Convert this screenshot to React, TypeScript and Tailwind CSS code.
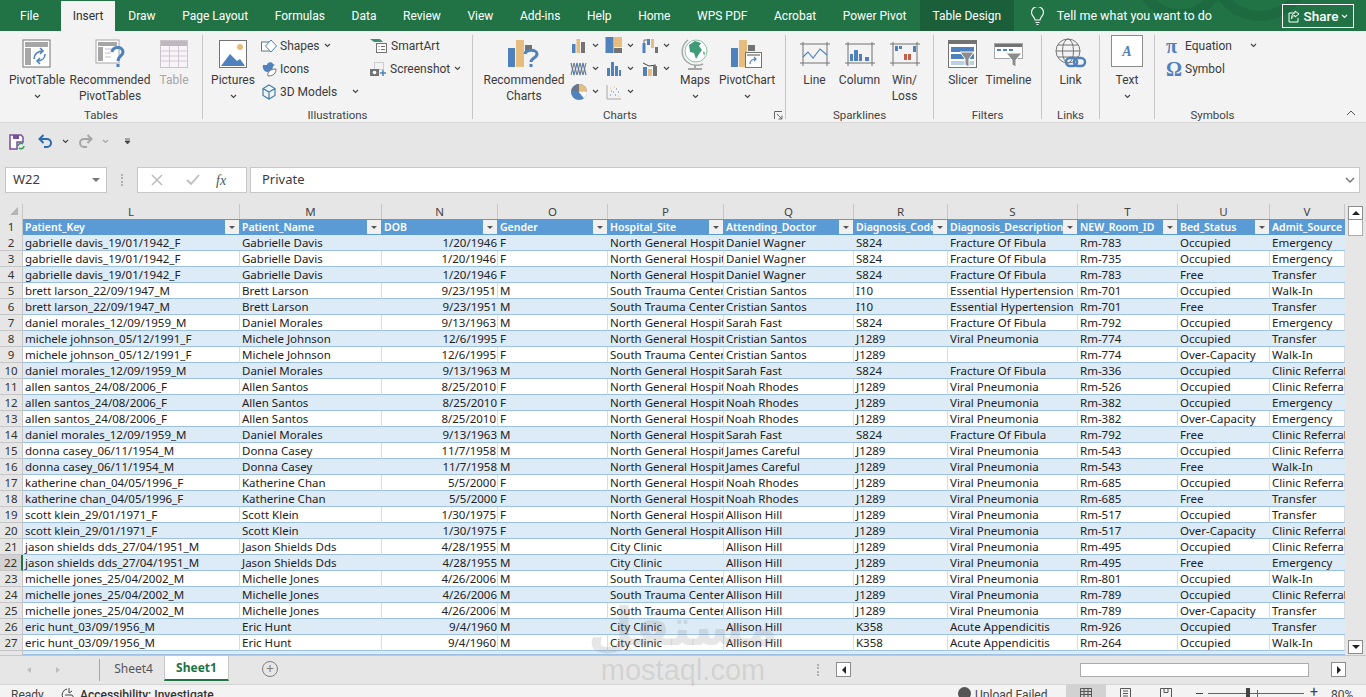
import type { ReactNode } from "react";

const GRAY = "#737373";
const BLUE = "#4f81bd";
const TAN = "#e6bc7f";

const cols = [
  { letter: "L", name: "Patient_Key", w: "w-[217px]" },
  { letter: "M", name: "Patient_Name", w: "w-[142px]" },
  { letter: "N", name: "DOB", w: "w-[116px]" },
  { letter: "O", name: "Gender", w: "w-[110px]" },
  { letter: "P", name: "Hospital_Site", w: "w-[116px]" },
  { letter: "Q", name: "Attending_Doctor", w: "w-[130px]" },
  { letter: "R", name: "Diagnosis_Code", w: "w-[94px]" },
  { letter: "S", name: "Diagnosis_Description", w: "w-[130px]" },
  { letter: "T", name: "NEW_Room_ID", w: "w-[100px]" },
  { letter: "U", name: "Bed_Status", w: "w-[92px]" },
  { letter: "V", name: "Admit_Source", w: "w-[75px]" },
];

const NG = "North General Hospital";
const ST = "South Trauma Center";
const CC = "City Clinic";
const FR = "Fracture Of Fibula";
const VP = "Viral Pneumonia";

const gabrielle = ["gabrielle davis_19/01/1942_F", "Gabrielle Davis", "1/20/1946", "F", NG, "Daniel Wagner", "S824", FR];
const brett = ["brett larson_22/09/1947_M", "Brett Larson", "9/23/1951", "M", ST, "Cristian Santos", "I10", "Essential Hypertension"];
const daniel = ["daniel morales_12/09/1959_M", "Daniel Morales", "9/13/1963", "M", NG, "Sarah Fast", "S824", FR];
const micheleA = ["michele johnson_05/12/1991_F", "Michele Johnson", "12/6/1995", "F", NG, "Cristian Santos", "J1289", VP];
const micheleB = ["michele johnson_05/12/1991_F", "Michele Johnson", "12/6/1995", "F", ST, "Cristian Santos", "J1289", ""];
const allen = ["allen santos_24/08/2006_F", "Allen Santos", "8/25/2010", "F", NG, "Noah Rhodes", "J1289", VP];
const donna = ["donna casey_06/11/1954_M", "Donna Casey", "11/7/1958", "M", NG, "James Careful", "J1289", VP];
const katherine = ["katherine chan_04/05/1996_F", "Katherine Chan", "5/5/2000", "F", NG, "Noah Rhodes", "J1289", VP];
const scott = ["scott klein_29/01/1971_F", "Scott Klein", "1/30/1975", "F", NG, "Allison Hill", "J1289", VP];
const jason = ["jason shields dds_27/04/1951_M", "Jason Shields Dds", "4/28/1955", "M", CC, "Allison Hill", "J1289", VP];
const michelle = ["michelle jones_25/04/2002_M", "Michelle Jones", "4/26/2006", "M", ST, "Allison Hill", "J1289", VP];
const eric = ["eric hunt_03/09/1956_M", "Eric Hunt", "9/4/1960", "M", CC, "Allison Hill", "K358", "Acute Appendicitis"];

const rows: string[][] = [
  [...gabrielle, "Rm-783", "Occupied", "Emergency"],
  [...gabrielle, "Rm-735", "Occupied", "Emergency"],
  [...gabrielle, "Rm-783", "Free", "Transfer"],
  [...brett, "Rm-701", "Occupied", "Walk-In"],
  [...brett, "Rm-701", "Free", "Transfer"],
  [...daniel, "Rm-792", "Occupied", "Emergency"],
  [...micheleA, "Rm-774", "Occupied", "Transfer"],
  [...micheleB, "Rm-774", "Over-Capacity", "Walk-In"],
  [...daniel, "Rm-336", "Occupied", "Clinic Referral"],
  [...allen, "Rm-526", "Occupied", "Clinic Referral"],
  [...allen, "Rm-382", "Occupied", "Emergency"],
  [...allen, "Rm-382", "Over-Capacity", "Emergency"],
  [...daniel, "Rm-792", "Free", "Clinic Referral"],
  [...donna, "Rm-543", "Occupied", "Clinic Referral"],
  [...donna, "Rm-543", "Free", "Walk-In"],
  [...katherine, "Rm-685", "Occupied", "Clinic Referral"],
  [...katherine, "Rm-685", "Free", "Transfer"],
  [...scott, "Rm-517", "Occupied", "Transfer"],
  [...scott, "Rm-517", "Over-Capacity", "Clinic Referral"],
  [...jason, "Rm-495", "Occupied", "Clinic Referral"],
  [...jason, "Rm-495", "Free", "Emergency"],
  [...michelle, "Rm-801", "Occupied", "Walk-In"],
  [...michelle, "Rm-789", "Occupied", "Clinic Referral"],
  [...michelle, "Rm-789", "Over-Capacity", "Transfer"],
  [...eric, "Rm-926", "Occupied", "Transfer"],
  [...eric, "Rm-264", "Occupied", "Walk-In"],
];

const tabs = ["Draw", "Page Layout", "Formulas", "Data", "Review", "View", "Add-ins", "Help", "Home", "WPS PDF", "Acrobat", "Power Pivot"];

function Chev({ color = "#444" }: { color?: string }) {
  return (
    <svg width="7" height="5" viewBox="0 0 7 5" className="shrink-0">
      <path d="M1 1l2.5 2.5L6 1" fill="none" stroke={color} strokeWidth="1.1" />
    </svg>
  );
}

function Icon({ w, h, children }: { w: number; h: number; children: ReactNode }) {
  return (
    <svg width={w} height={h} viewBox={`0 0 ${w} ${h}`} className="shrink-0">
      {children}
    </svg>
  );
}

const PivotIcon = () => (
  <Icon w={30} h={30}>
    <rect x="1" y="1" width="27" height="27" fill="#fff" stroke={GRAY} />
    <rect x="3" y="3" width="23" height="5" fill="#a6a6a6" />
    <rect x="3" y="9" width="6" height="17" fill="#a6a6a6" />
    <path d="M12 20c0-5 4-8 9-8M18 9l3 3-3 3M23 15c0 4-3 7-8 7M18 19l-3 3 3 3" fill="none" stroke={BLUE} strokeWidth="1.6" />
  </Icon>
);

const RecPivotIcon = () => (
  <Icon w={30} h={30}>
    <rect x="1" y="1" width="23" height="23" fill="#fff" stroke="#a6a6a6" />
    <rect x="3" y="3" width="19" height="4" fill="#a6a6a6" />
    <rect x="3" y="8" width="5" height="14" fill="#a6a6a6" />
    <path d="M10 10h8M10 14h6M10 18h6" stroke="#bfbfbf" />
    <path d="M17 13c1-6 11-6 11 0 0 4-5 4-5 9" fill="none" stroke={BLUE} strokeWidth="3" />
    <rect x="21.5" y="25" width="3" height="3" fill={BLUE} />
  </Icon>
);

const TableIcon = () => (
  <Icon w={28} h={28}>
    <rect x="0.5" y="0.5" width="27" height="27" fill="#f8f3f8" stroke="#cbc3cb" />
    <rect x="1" y="1" width="26" height="5" fill="#bfb8bf" />
    <path d="M1 11h26M1 16h26M1 21h26M9.5 6v21M18.5 6v21" stroke="#d5c8d5" />
  </Icon>
);

const PicturesIcon = () => (
  <Icon w={28} h={28}>
    <rect x="0.5" y="0.5" width="27" height="27" fill="#fff" stroke={GRAY} />
    <circle cx="21" cy="7" r="3" fill={TAN} />
    <path d="M2 26l9-12 7 7 3-2 5 7z" fill={BLUE} />
  </Icon>
);

const ShapesIcon = () => (
  <Icon w={16} h={16}>
    <rect x="0.5" y="4" width="9" height="9" fill="#fff" stroke={GRAY} />
    <path d="M10 2l5.500 6-5.500 6-5.500-6z" fill="#fff" stroke={BLUE} />
  </Icon>
);

const IconsIcon = () => (
  <Icon w={16} h={16}>
    <path d="M2 4h4c0-3 5-4 6-1l2 1-2 1c0 3-2 6-6 6-2 0-5-3-4-7z" fill={BLUE} />
    <path d="M7 15c-1-4 2-7 8-7 0 4-2 7-8 7z" fill="#fff" stroke={GRAY} />
  </Icon>
);

const ModelsIcon = () => (
  <Icon w={16} h={16}>
    <path d="M8 1l6 3.500v7L8 15l-6-3.500v-7zM2 4.500L8 8l6-3.500M8 8v7" fill="none" stroke="#3f7fa8" strokeWidth="1.200" />
  </Icon>
);

const SmartArtIcon = () => (
  <Icon w={18} h={16}>
    <path d="M0 1h10l3 3H4z" fill="#3f8f72" />
    <rect x="6.500" y="5.500" width="10" height="9" fill="#fff" stroke={GRAY} />
    <path d="M8.500 8.500h1M11 8.500h4M8.500 11.500h1M11 11.500h4" stroke={GRAY} />
  </Icon>
);

const ScreenshotIcon = () => (
  <Icon w={17} h={16}>
    <rect x="4.500" y="1.500" width="9" height="7" fill="none" stroke="#a6a6a6" strokeDasharray="1 1" />
    <rect x="0" y="8" width="9" height="7" fill={GRAY} />
    <circle cx="4.500" cy="11.500" r="1.800" fill="#fff" />
    <path d="M13 9v6M10 12h6" stroke={BLUE} strokeWidth="1.500" />
  </Icon>
);

const RecChartsIcon = () => (
  <Icon w={32} h={30}>
    <rect x="0" y="9" width="7" height="19" fill={BLUE} />
    <rect x="8" y="1" width="8" height="27" fill={TAN} />
    <rect x="17" y="6" width="7" height="6" fill={GRAY} />
    <path d="M17 15c1-5 12-5 12 0 0 4-6 4-6 8" fill="none" stroke={BLUE} strokeWidth="3" />
    <rect x="21.500" y="25" width="3" height="3" fill={BLUE} />
  </Icon>
);

const ColumnMini = () => (
  <Icon w={16} h={16}>
    <rect x="1" y="6" width="3.500" height="9" fill={BLUE} />
    <rect x="5.500" y="1" width="3.500" height="14" fill={TAN} />
    <rect x="10" y="4" width="4" height="11" fill={GRAY} />
  </Icon>
);
const TreemapMini = () => (
  <Icon w={18} h={17}>
    <rect x="0.500" y="0" width="8" height="16" fill={BLUE} />
    <rect x="9" y="0" width="8" height="10" fill={TAN} />
    <rect x="9" y="11" width="8" height="5" fill={GRAY} />
  </Icon>
);
const WaterfallMini = () => (
  <Icon w={16} h={16}>
    <rect x="0.500" y="5" width="3" height="10" fill={BLUE} />
    <path d="M2 5V2h4" stroke={GRAY} fill="none" />
    <rect x="5" y="1" width="3" height="6" fill={BLUE} />
    <rect x="9" y="1" width="3" height="9" fill={TAN} />
    <rect x="13" y="9" width="3" height="6" fill={GRAY} />
  </Icon>
);
const LineMini = () => (
  <Icon w={18} h={16}>
    <path d="M1 2l3 12 3-12 3 12 3-12 3 12" fill="none" stroke={BLUE} strokeWidth="1.200" />
    <path d="M1 14l3-12 3 12 3-12 3 12 3-12" fill="none" stroke={GRAY} strokeWidth="1" />
  </Icon>
);
const BarsMini = () => (
  <Icon w={16} h={16}>
    <rect x="1" y="7" width="3" height="8" fill={BLUE} />
    <rect x="5" y="1" width="3" height="14" fill={BLUE} />
    <rect x="9" y="5" width="3" height="10" fill={BLUE} />
    <rect x="13" y="9" width="2" height="6" fill={BLUE} />
  </Icon>
);
const ComboMini = () => (
  <Icon w={16} h={16}>
    <rect x="1" y="6" width="4" height="9" fill={BLUE} />
    <rect x="6" y="8" width="4" height="7" fill={TAN} />
    <rect x="11" y="5" width="4" height="10" fill={GRAY} />
    <path d="M1 2l6 3 7-1" fill="none" stroke="#444" />
  </Icon>
);
const PieMini = () => (
  <Icon w={18} h={18}>
    <circle cx="9" cy="9" r="8" fill={BLUE} />
    <path d="M9 9V1a8 8 0 0 1 8 8z" fill={TAN} />
    <path d="M9 9h8a8 8 0 0 1-3 6z" fill="#fff" stroke="#fff" strokeWidth="0.500" />
    <path d="M9 9V1H7l-6 6z" fill={GRAY} opacity="0.800" />
  </Icon>
);
const ScatterMini = () => (
  <Icon w={16} h={16}>
    <path d="M1 1v14h14" fill="none" stroke="#a6a6a6" />
    <path d="M4 11h1M7 8h1M10 5h1M5 7h1M9 11h1M12 8h1" stroke={BLUE} />
    <path d="M4 4h1M12 12h1M8 3h1" stroke={TAN} />
  </Icon>
);

const MapsIcon = () => (
  <Icon w={28} h={34}>
    <path d="M7 3C0 8-1 19 6 25c5 4 12 4 16 2" fill="none" stroke="#a6a6a6" strokeWidth="1.500" />
    <circle cx="15" cy="14" r="11" fill="#fff" stroke="#8dbfa8" />
    <path d="M8 8l6-4 6 2-2 3 3 4-3 4-3 5-2-6-4-1zM22 14l2 2-1 3z" fill="#3f9a78" />
    <path d="M14 28v3M7 32h14" stroke="#a6a6a6" strokeWidth="2" />
  </Icon>
);

const PivotChartIcon = () => (
  <Icon w={32} h={30}>
    <rect x="0" y="9" width="7" height="19" fill={BLUE} />
    <rect x="8" y="1" width="8" height="27" fill={TAN} />
    <rect x="17" y="6" width="7" height="6" fill={GRAY} />
    <rect x="14.500" y="13.500" width="16" height="15" fill="#fff" stroke={GRAY} />
    <path d="M16 15h13v2H16z" fill="#a6a6a6" />
    <path d="M19 25c0-3 2-5 6-5M23 18l2 2-2 2" fill="none" stroke={BLUE} strokeWidth="1.200" />
  </Icon>
);

const SparkLine = () => (
  <Icon w={32} h={24}>
    <path d="M1 2h30M1 21h30M4 0v24M28 0v24" stroke={GRAY} />
    <path d="M4 15l5-5 5 6 7-9 7 6" fill="none" stroke={BLUE} strokeWidth="1.100" />
  </Icon>
);
const SparkColumn = () => (
  <Icon w={32} h={24}>
    <path d="M1 2h30M1 21h30M4 0v24M28 0v24" stroke={GRAY} />
    <path d="M6 12h3v7H6zM10 8h4v11h-4zM15 12h3v7h-3zM21 15h4v4h-4z" fill={BLUE} />
  </Icon>
);
const SparkWin = () => (
  <Icon w={32} h={24}>
    <path d="M1 2h30M1 21h30M4 0v24M28 0v24" stroke={GRAY} />
    <path d="M6 4h3v5H6zM10 4h3v3h-3zM24 4h3v6h-3z" fill={BLUE} />
    <path d="M15 12h3v6h-3zM19 12h3v6h-3z" fill="#c0604d" />
  </Icon>
);

const SlicerIcon = () => (
  <Icon w={30} h={28}>
    <rect x="0.500" y="0.500" width="28" height="27" fill="#fff" stroke={GRAY} />
    <rect x="1" y="1" width="27" height="3" fill={GRAY} />
    <rect x="3" y="7" width="23" height="5" fill={BLUE} />
    <rect x="3" y="14" width="23" height="5" fill={BLUE} />
    <rect x="3" y="21" width="23" height="4" fill="#bcd1e6" />
    <path d="M12 12h14l-5 7v8l-4-2v-6z" fill="#8c8c8c" stroke="#fff" />
  </Icon>
);
const TimelineIcon = () => (
  <Icon w={30} h={28}>
    <rect x="0.500" y="3.500" width="28" height="15" fill="#fff" stroke="#a6a6a6" />
    <rect x="1" y="4" width="27" height="3" fill={GRAY} />
    <path d="M3 10h4M9 10h4M15 10h4" stroke={BLUE} strokeWidth="2" />
    <path d="M12 13h16l-6 7v7l-4-2v-5z" fill="#8c8c8c" stroke="#fff" />
  </Icon>
);
const LinkIcon = () => (
  <Icon w={32} h={32}>
    <circle cx="13" cy="13" r="12" fill="none" stroke={GRAY} />
    <ellipse cx="13" cy="13" rx="5.500" ry="12" fill="none" stroke={GRAY} />
    <path d="M1 13h24M3 7h20M3 19h20" stroke={GRAY} />
    <rect x="11" y="20" width="11" height="8" rx="4" fill="none" stroke={BLUE} strokeWidth="2.500" />
    <rect x="19" y="20" width="11" height="8" rx="4" fill="none" stroke={BLUE} strokeWidth="2.500" />
  </Icon>
);
const SaveIcon = () => (
  <Icon w={16} h={16}>
    <path d="M1 1h11l2 2v5H8v7H1z" fill="#fff" stroke="#7a4f9a" strokeWidth="1.500" />
    <path d="M4 1h6v4H4z" fill="#7a4f9a" />
    <path d="M9 12a3 3 0 0 1 5-2M15 12a3 3 0 0 1-5 2" fill="none" stroke="#2e9b58" strokeWidth="1.500" />
  </Icon>
);
const UndoIcon = ({ color, flip }: { color: string; flip?: boolean }) => (
  <svg width="15" height="15" viewBox="0 0 15 15" className={flip ? "-scale-x-100 shrink-0" : "shrink-0"}>
    <path d="M2 5h7a4 4 0 0 1 0 8H6M5.500 1L1.500 5l4 4" fill="none" stroke={color} strokeWidth="2" />
  </svg>
);

function BigBtn({ w, icon, lines, chevron, muted }: { w: string; icon: ReactNode; lines: string[]; chevron?: boolean; muted?: boolean }) {
  return (
    <div className={`${w} flex flex-col items-center shrink-0`}>
      <div className="h-[41px] flex items-center justify-center pt-[4px]">{icon}</div>
      {lines.map((l) => (
        <div key={l} className={`h-[16px] leading-[16px] whitespace-nowrap ${muted ? "text-[#a6a6a6]" : ""}`}>
          {l}
        </div>
      ))}
      {chevron && (
        <div className="h-[16px] flex items-center">
          <Chev />
        </div>
      )}
    </div>
  );
}

function SmallBtn({ icon, label, chevGap }: { icon: ReactNode; label: string; chevGap?: string }) {
  return (
    <div className="h-[23px] flex items-center gap-[3px] whitespace-nowrap">
      {icon}
      <span>{label}</span>
      {chevGap && (
        <span className={chevGap}>
          <Chev />
        </span>
      )}
    </div>
  );
}

function MiniChart({ icon }: { icon: ReactNode }) {
  return (
    <div className="h-[23px] w-[35px] flex items-center gap-[3px]">
      <div className="w-[20px] flex justify-center">{icon}</div>
      <Chev />
    </div>
  );
}

function Group({ w, label, children, after, labelPad = "" }: { w: string; label: string; children: ReactNode; after?: ReactNode; labelPad?: string }) {
  return (
    <div className={`${w} h-[92px] flex flex-col shrink-0`}>
      <div className="h-[76px] flex">{children}</div>
      <div className={`h-[16px] leading-[16px] flex justify-center text-[11.500px] text-[#444] relative ${labelPad}`}>
        {label}
        {after}
      </div>
    </div>
  );
}

const Sep = () => <div className="w-px h-[84px] mt-[4px] bg-[#c6c6c6] shrink-0" />;

function Ribbon() {
  return (
    <div className="h-[92px] bg-[#f3f3f3] flex text-[12px] text-[#3b3b3b] border-b border-[#d8d8d8] shrink-0 font-['Roboto',sans-serif]">
      <Group w="w-[202px]" label="Tables">
        <BigBtn w="w-[74px]" icon={<PivotIcon />} lines={["PivotTable"]} chevron />
        <BigBtn w="w-[72px]" icon={<RecPivotIcon />} lines={["Recommended", "PivotTables"]} />
        <BigBtn w="w-[56px]" icon={<TableIcon />} lines={["Table"]} muted />
      </Group>
      <Sep />
      <Group w="w-[269px]" label="Illustrations">
        <BigBtn w="w-[58px] pl-[2px]" icon={<PicturesIcon />} lines={["Pictures"]} chevron />
        <div className="w-[109px] pt-[3px] shrink-0">
          <SmallBtn icon={<ShapesIcon />} label="Shapes" chevGap="ml-[1px]" />
          <SmallBtn icon={<IconsIcon />} label="Icons" />
          <SmallBtn icon={<ModelsIcon />} label="3D Models" chevGap="ml-[12px]" />
        </div>
        <div className="pt-[3px]">
          <SmallBtn icon={<SmartArtIcon />} label="SmartArt" />
          <SmallBtn icon={<ScreenshotIcon />} label="Screenshot" chevGap="ml-[1px]" />
        </div>
      </Group>
      <Sep />
      <Group
        w="w-[312px]"
        label="Charts"
        labelPad="pr-[18px]"
        after={
          <svg width="9" height="9" viewBox="0 0 9 9" className="absolute right-[2px] top-[4px]">
            <path d="M0.500 8V0.500H8M3 3l5 5M8 4.500V8H4.500" fill="none" stroke="#666" />
          </svg>
        }
      >
        <BigBtn w="w-[96px] pl-[6px]" icon={<RecChartsIcon />} lines={["Recommended", "Charts"]} />
        <div className="w-[35px] pt-[3px] shrink-0">
          <MiniChart icon={<ColumnMini />} />
          <MiniChart icon={<LineMini />} />
          <MiniChart icon={<PieMini />} />
        </div>
        <div className="w-[36px] pt-[3px] shrink-0">
          <MiniChart icon={<TreemapMini />} />
          <MiniChart icon={<BarsMini />} />
          <MiniChart icon={<ScatterMini />} />
        </div>
        <div className="w-[30px] pt-[3px] shrink-0">
          <MiniChart icon={<WaterfallMini />} />
          <MiniChart icon={<ComboMini />} />
        </div>
        <BigBtn w="w-[50px]" icon={<MapsIcon />} lines={["Maps"]} chevron />
        <BigBtn w="w-[54px]" icon={<PivotChartIcon />} lines={["PivotChart"]} chevron />
      </Group>
      <Sep />
      <Group w="w-[147px]" label="Sparklines">
        <div className="w-[6px] shrink-0" />
        <BigBtn w="w-[45px]" icon={<SparkLine />} lines={["Line"]} />
        <BigBtn w="w-[45px]" icon={<SparkColumn />} lines={["Column"]} />
        <BigBtn w="w-[45px]" icon={<SparkWin />} lines={["Win/", "Loss"]} />
      </Group>
      <Sep />
      <Group w="w-[107px]" label="Filters">
        <div className="w-[7px] shrink-0" />
        <BigBtn w="w-[44px]" icon={<SlicerIcon />} lines={["Slicer"]} />
        <BigBtn w="w-[47px]" icon={<TimelineIcon />} lines={["Timeline"]} />
      </Group>
      <Sep />
      <Group w="w-[57px]" label="Links">
        <BigBtn w="w-[57px]" icon={<LinkIcon />} lines={["Link"]} />
      </Group>
      <Sep />
      <Group w="w-[54px]" label="">
        <div className="w-[54px] flex flex-col items-center pt-[4px]">
          <div className="w-[32px] h-[32px] bg-white border border-[#8c8c8c] flex items-center justify-center text-[#4f81bd] font-bold italic text-[14px] font-['Liberation_Serif',serif]">
            A
          </div>
          <div className="h-[16px] leading-[16px] mt-[5px]">Text</div>
          <div className="h-[16px] flex items-center">
            <Chev />
          </div>
        </div>
      </Group>
      <Sep />
      <Group w="w-[115px]" label="Symbols">
        <div className="pt-[3px] pl-[11px] w-full">
          <div className="h-[23px] flex items-center whitespace-nowrap">
            <span className="w-[19px] text-[#4f81bd] text-[20px] leading-none font-bold font-['Liberation_Serif',serif]">π</span>
            <span>Equation</span>
            <span className="ml-[18px]">
              <Chev />
            </span>
          </div>
          <div className="h-[23px] flex items-center whitespace-nowrap">
            <span className="w-[19px] text-[#4f81bd] text-[20px] leading-none font-bold font-['Liberation_Serif',serif]">Ω</span>
            <span>Symbol</span>
          </div>
        </div>
      </Group>
      <div className="flex-1 flex justify-end items-end pr-[10px] pb-[6px]">
        <svg width="10" height="6" viewBox="0 0 10 6">
          <path d="M1 5l4-4 4 4" fill="none" stroke="#555" />
        </svg>
      </div>
    </div>
  );
}

function TitleTabs() {
  return (
    <div className="h-[31px] bg-[#217346] flex items-stretch text-[12px] text-white shrink-0 relative overflow-hidden font-['Roboto',sans-serif]">
      <svg width="260" height="31" viewBox="0 0 260 31" className="absolute left-[1110px] top-0">
        <circle cx="70" cy="-28" r="42" fill="none" stroke="#1d6a40" strokeWidth="10" />
        <circle cx="150" cy="-30" r="46" fill="none" stroke="#1d6a40" strokeWidth="10" />
      </svg>
      <div className="w-[61px] pl-[20px] pt-px flex items-center">File</div>
      <div className="w-[54px] mt-[1px] bg-[#f3f3f3] text-[#2f2f2f] flex items-center justify-center">Insert</div>
      {tabs.map((t) => (
        <div key={t} className="px-[13.300px] pt-px flex items-center whitespace-nowrap">
          {t}
        </div>
      ))}
      <div className="w-[94px] pt-px bg-[#1b5e3a] flex items-center justify-center whitespace-nowrap">Table Design</div>
      <div className="ml-[16px] flex items-center">
        <svg width="15" height="18" viewBox="0 0 15 18">
          <path d="M5 13c0-3-3.500-4-3.500-7.500a6 6 0 0 1 12 0C13.500 9 10 10 10 13zM5.500 15.500h4M6.500 17.500h2" fill="none" stroke="#fff" strokeWidth="1.100" />
        </svg>
      </div>
      <div className="ml-[12px] pt-px flex items-center whitespace-nowrap text-[12.500px] relative">Tell me what you want to do</div>
      <div className="absolute left-[1282px] top-[4px] w-[72px] h-[24px] border border-white flex items-center justify-center gap-[3px] font-medium text-[13.500px]">
        <svg width="13" height="13" viewBox="0 0 13 13">
          <path d="M6 3H1v9h9V8M7 1l4 3-4 3V5.500C5 5.500 4 7 3.500 9 3.500 5.500 5 3 7 3z" fill="none" stroke="#fff" />
        </svg>
        Share
        <Chev color="#fff" />
      </div>
    </div>
  );
}

function Qat() {
  return (
    <div className="h-[37px] bg-[#e6e6e6] flex items-center pl-[9px] shrink-0">
      <SaveIcon />
      <div className="w-[13px]" />
      <UndoIcon color="#2b6cb0" />
      <div className="w-[9px]" />
      <Chev />
      <div className="w-[9px]" />
      <UndoIcon color="#a6a6a6" flip />
      <div className="w-[9px]" />
      <Chev color="#a6a6a6" />
      <div className="w-[15px]" />
      <svg width="7" height="7" viewBox="0 0 7 7">
        <path d="M1 1h5M1 3h5l-2.500 3z" fill="#444" stroke="#444" strokeWidth="0.800" />
      </svg>
    </div>
  );
}

function FormulaBar() {
  return (
    <div className="h-[44px] bg-[#e6e6e6] flex items-start pt-[7px] pl-[5px] pr-[6px] text-[13px] text-[#3b3b3b] shrink-0">
      <div className="w-[102px] h-[26px] bg-white border border-[#c6c6c6] flex items-center justify-between pl-[7px] pr-[6px]">
        W22
        <div className="w-0 h-0 border-x-[4px] border-x-transparent border-t-[4px] border-t-[#777]" />
      </div>
      <div className="w-[30px] h-[26px] flex items-center justify-center">
        <div className="h-[12px] border-l-2 border-dotted border-[#b0b0b0]" />
      </div>
      <div className="w-[110px] h-[26px] bg-white border border-[#c6c6c6] flex items-center pl-[13px]">
        <svg width="12" height="12" viewBox="0 0 12 12">
          <path d="M1 1l10 10M11 1L1 11" stroke="#bdbdbd" strokeWidth="1.500" />
        </svg>
        <svg width="14" height="12" viewBox="0 0 14 12" className="ml-[23px]">
          <path d="M1 6l4 4 8-9" fill="none" stroke="#bdbdbd" strokeWidth="1.800" />
        </svg>
        <span className="ml-[16px] italic font-['Liberation_Serif',serif] text-[#555] text-[14px]">fx</span>
      </div>
      <div className="ml-[3px] flex-1 h-[26px] bg-white border border-[#c6c6c6] flex items-center justify-between pl-[11px] pr-[4px]">
        Private
        <svg width="10" height="7" viewBox="0 0 10 7">
          <path d="M1 1l4 4 4-4" fill="none" stroke="#777" strokeWidth="1.500" />
        </svg>
      </div>
    </div>
  );
}

function FilterBtn() {
  return (
    <div className="w-[14px] h-[14px] bg-[#f0f0f0] flex items-center justify-center shrink-0 mr-px">
      <div className="w-0 h-0 border-x-[3px] border-x-transparent border-t-[3px] border-t-[#555]" />
    </div>
  );
}

function Sheet() {
  return (
    <div className="h-[451px] flex shrink-0">
      <div className="w-[1345px] shrink-0 overflow-hidden">
        <div className="h-[15px] flex bg-[#e6e6e6]">
          <div className="w-[23px] flex items-end justify-end pr-[4px] pb-[4px] border-r border-[#c6c6c6]">
            <div className="w-0 h-0 border-b-[8px] border-b-[#b5b5b5] border-l-[8px] border-l-transparent" />
          </div>
          {cols.map((c) => (
            <div key={c.letter} className={`${c.w} border-r border-[#c6c6c6] text-center text-[11.5px] leading-[15px] text-[#444]`}>
              {c.letter}
            </div>
          ))}
        </div>
        <div className="h-[16px] flex">
          <div className="w-[23px] bg-[#e6e6e6] border-r border-[#c6c6c6] text-center text-[11.500px] leading-[16px] text-[#333]">1</div>
          {cols.map((c) => (
            <div key={c.letter} className={`${c.w} bg-[#5b9bd5] flex items-center pl-[2px] text-[10.500px] font-semibold text-white`}>
              <span className="flex-1 overflow-hidden whitespace-nowrap pt-px">{c.name}</span>
              {c.letter !== "V" && <FilterBtn />}
            </div>
          ))}
        </div>
        {rows.map((r, i) => (
          <div key={i} className="h-[16px] flex">
            <div
              className={
                i === 20
                  ? "w-[23px] bg-[#d2d2d2] border-r-2 border-r-[#217346] border-b border-b-[#c6c6c6] text-center text-[11.500px] leading-[15px] text-[#333]"
                  : "w-[23px] bg-[#e6e6e6] border-r border-[#c6c6c6] border-b border-b-[#c6c6c6] text-center text-[11.500px] leading-[15px] text-[#333]"
              }
            >
              {i + 2}
            </div>
            {r.map((v, j) => (
              <div
                key={j}
                className={`${cols[j].w} ${i % 2 === 0 ? "bg-[#ddebf7]" : "bg-white border-r border-r-[#dcdcdc]"} border-b border-b-[#9bc2e6] pl-[2px] pr-[1px] text-[11.500px] leading-[15px] text-[#222] overflow-hidden whitespace-nowrap ${j === 2 ? "text-right" : ""}`}
              >
                {v}
              </div>
            ))}
          </div>
        ))}
        <div className="h-[4px] flex">
          <div className="w-[23px] bg-[#e6e6e6] border-r border-[#c6c6c6]" />
          <div className="flex-1 bg-[#ddebf7] border-b border-b-[#9bc2e6]" />
        </div>
      </div>
      <div className="flex-1 bg-[#e6e6e6] pt-[2px] pl-[3px] flex flex-col">
        <div className="w-[15px] h-[14px] bg-white border border-[#8c8c8c] flex items-center justify-center">
          <div className="w-0 h-0 border-x-[4px] border-x-transparent border-b-[4px] border-b-[#222]" />
        </div>
        <div className="w-[15px] h-[16px] bg-white border border-[#ababab] border-t-0" />
        <div className="flex-1" />
        <div className="w-[15px] h-[14px] mb-[1px] bg-white border border-[#8c8c8c] flex items-center justify-center">
          <div className="w-0 h-0 border-x-[4px] border-x-transparent border-t-[4px] border-t-[#222]" />
        </div>
      </div>
    </div>
  );
}

function SheetBar() {
  return (
    <div className="h-[29px] bg-[#e6e6e6] border-t border-[#c6c6c6] flex items-start text-[12px] shrink-0">
      <div className="w-[100px] h-[22px] mt-[3px] flex items-center border-r border-[#a6a6a6] pl-[27px] gap-[25px]">
        <div className="w-0 h-0 border-y-[3px] border-y-transparent border-r-[4px] border-r-[#bdbdbd]" />
        <div className="w-0 h-0 border-y-[3px] border-y-transparent border-l-[4px] border-l-[#bdbdbd]" />
      </div>
      <div className="w-[64px] h-[25px] flex items-center justify-center text-[#555] pl-[3px]">Sheet4</div>
      <div className="w-[65px] h-[25px] bg-white border-x border-[#c6c6c6] border-b-2 border-b-[#217346] flex items-center justify-center font-bold text-[#217346]">
        Sheet1
      </div>
      <div className="ml-[33px] mt-[5px] w-[16px] h-[16px] rounded-full border border-[#7f7f7f] flex items-center justify-center text-[#7f7f7f] leading-none text-[14px]">
        +
      </div>
      <div className="ml-[539px] mt-[8px] h-[12px] border-l-2 border-dotted border-[#b0b0b0]" />
      <div className="ml-[17px] mt-[6px] w-[15px] h-[15px] bg-white border border-[#8c8c8c] flex items-center justify-center">
        <div className="w-0 h-0 border-y-[4px] border-y-transparent border-r-[4px] border-r-[#222]" />
      </div>
      <div className="ml-[229px] mt-[7px] w-[229px] h-[14px] bg-white border border-[#ababab]" />
      <div className="ml-[22px] mt-[6px] w-[15px] h-[15px] bg-white border border-[#8c8c8c] flex items-center justify-center">
        <div className="w-0 h-0 border-y-[4px] border-y-transparent border-l-[4px] border-l-[#222]" />
      </div>
    </div>
  );
}

function StatusBar() {
  return (
    <div className="h-[24px] bg-[#f3f3f3] border-t border-[#d4d4d4] flex items-start text-[12px] leading-[16px] text-[#444] shrink-0 font-['Roboto',sans-serif]">
      <span className="ml-[11px] mt-[2px] w-[32px]">Ready</span>
      <svg width="15" height="14" viewBox="0 0 15 14" className="ml-[18px] mt-[2px]">
        <path d="M2 11A6 6 0 0 1 6 2M8 1v5l3-2M4 8h7l2 3" fill="none" stroke="#444" />
      </svg>
      <span className="ml-[4px] mt-[2px] font-medium text-[#333] whitespace-nowrap w-[127px]">Accessibility: Investigate</span>
      <div className="ml-[751px] mt-[2px] w-[13px] h-[13px] rounded-full bg-[#555]" />
      <span className="ml-[4px] mt-[2px] w-[75px] whitespace-nowrap">Upload Failed</span>
      <div className="ml-[16px] w-[40px] h-[24px] bg-[#d2d2d2] flex justify-center pt-[3px]">
        <svg width="12" height="10" viewBox="0 0 12 10">
          <path d="M0.500 0.500h11v9h-11zM0.500 3.500h11M0.500 6.500h11M4 0.500v9M8 0.500v9" fill="none" stroke="#555" />
        </svg>
      </div>
      <svg width="11" height="12" viewBox="0 0 11 12" className="ml-[14px] mt-[3px]">
        <path d="M0.500 0.500h10v11h-10zM3 3h5M3 5.500h5M3 8h5" fill="none" stroke="#555" />
      </svg>
      <svg width="12" height="10" viewBox="0 0 12 10" className="ml-[29px] mt-[3px]">
        <path d="M0.500 0.500h11v9h-11zM4 0.500v4h4v-4" fill="none" stroke="#555" />
      </svg>
      <div className="ml-[24px] mt-[8px] w-[7px] h-px bg-[#444]" />
      <div className="ml-[5px] mt-[8px] w-[96px] h-px bg-[#666] relative">
        <div className="absolute left-[38px] top-[-5px] w-[4px] h-[11px] bg-[#444]" />
        <div className="absolute left-[49px] top-[-3px] w-px h-[7px] bg-[#666]" />
      </div>
      <span className="ml-[6px] mt-[-1px] text-[14px]">+</span>
      <span className="ml-[13px] mt-[2px] whitespace-nowrap">80%</span>
    </div>
  );
}

export default function App() {
  return (
    <div className="w-[1366px] h-[697px] overflow-hidden flex flex-col relative bg-[#e6e6e6] font-['Noto_Sans','Open_Sans',sans-serif]">
      <TitleTabs />
      <Ribbon />
      <Qat />
      <FormulaBar />
      <Sheet />
      <SheetBar />
      <StatusBar />
      <div className="absolute left-[590px] top-[598px] w-[186px] flex flex-col items-center pointer-events-none text-[#808080]/20">
        <span className="font-bold text-[52px] leading-[58px] font-['DejaVu_Sans',sans-serif]">مستقل</span>
        <span className="text-[29px] leading-[28px] font-['Liberation_Sans',sans-serif]">mostaql.com</span>
      </div>
    </div>
  );
}
